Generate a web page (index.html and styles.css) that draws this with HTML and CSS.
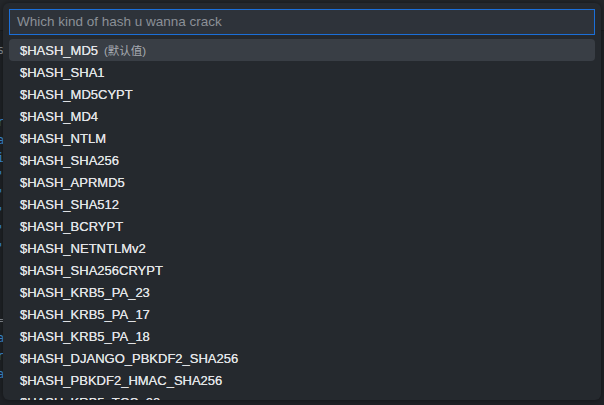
FILE: index.html
```html
<!DOCTYPE html>
<html>
<head>
<meta charset="utf-8">
<link rel="stylesheet" href="styles.css">
</head>
<body>
<div class="editor">
  <div class="tabbar"></div>
  <div class="lines">
    <div class="ln gray">s</div>
    <div class="ln"></div>
    <div class="ln"></div>
    <div class="ln"></div>
    <div class="ln blue">r</div>
    <div class="ln blue">a</div>
    <div class="ln blue">i</div>
    <div class="ln blue">'</div>
    <div class="ln blue">'</div>
    <div class="ln blue">'</div>
    <div class="ln blue">'</div>
    <div class="ln blue">'</div>
    <div class="ln"></div>
    <div class="ln"></div>
    <div class="ln"></div>
    <div class="ln gray">=</div>
    <div class="ln blue">a</div>
    <div class="ln blue">r</div>
    <div class="ln blue">a</div>
  </div>
</div>
<div class="picker">
  <div class="input">Which kind of hash u wanna crack</div>
  <ul class="list">
    <li class="item selected">$HASH_MD5<span class="desc">(默认值)</span></li>
    <li class="item">$HASH_SHA1</li>
    <li class="item">$HASH_MD5CYPT</li>
    <li class="item">$HASH_MD4</li>
    <li class="item">$HASH_NTLM</li>
    <li class="item">$HASH_SHA256</li>
    <li class="item">$HASH_APRMD5</li>
    <li class="item">$HASH_SHA512</li>
    <li class="item">$HASH_BCRYPT</li>
    <li class="item">$HASH_NETNTLMv2</li>
    <li class="item">$HASH_SHA256CRYPT</li>
    <li class="item">$HASH_KRB5_PA_23</li>
    <li class="item">$HASH_KRB5_PA_17</li>
    <li class="item">$HASH_KRB5_PA_18</li>
    <li class="item">$HASH_DJANGO_PBKDF2_SHA256</li>
    <li class="item">$HASH_PBKDF2_HMAC_SHA256</li>
    <li class="item">$HASH_KRB5_TGS_23</li>
  </ul>
</div>
</body>
</html>
```
FILE: styles.css
```css
html, body {
  margin: 0;
  padding: 0;
  width: 604px;
  height: 405px;
  overflow: hidden;
  background: #1f2226;
  font-family: "Liberation Sans", Arial, "Noto Sans CJK SC", sans-serif;
}
.editor {
  width: 604px;
  height: 405px;
}
.tabbar {
  height: 30px;
  background: #24272b;
  border-bottom: 1px solid #1a1c1f;
}
.lines {
  padding-top: 10px;
  width: 5px;
  overflow: hidden;
}
.ln {
  height: 18px;
  line-height: 18px;
  font-family: "DejaVu Sans Mono", monospace;
  font-size: 12px;
  width: 5px;
  text-indent: -3px;
  white-space: pre;
}
.ln.blue { color: #3d8fd6; }
.ln.gray { color: #8a8f96; }
.picker {
  position: absolute;
  left: 3px;
  top: 3px;
  width: 586px;
  height: 391px;
  padding: 6px 6px 0 6px;
  background: #25292e;
  border-radius: 6px;
  box-shadow: 0 0 6px rgba(0,0,0,0.45);
  overflow: hidden;
}
.input {
  height: 24px;
  line-height: 24px;
  border: 1px solid #1b6fd8;
  background: #2e333a;
  color: #8b9097;
  font-size: 13.5px;
  padding-left: 7px;
}
.list {
  list-style: none;
  margin: 4px 0 0 0;
  padding: 0;
}
.item {
  height: 22px;
  line-height: 23px;
  padding-left: 11px;
  color: #e2e4e7;
  font-size: 13px;
  border-radius: 4px;
  white-space: nowrap;
  text-shadow: 0 0 0.3px #e2e4e7;
}
.item.selected {
  background: #393e45;
}
.desc {
  color: #a7abb1;
  font-size: 11.5px;
  margin-left: 6px;
  text-shadow: none;
}
```
